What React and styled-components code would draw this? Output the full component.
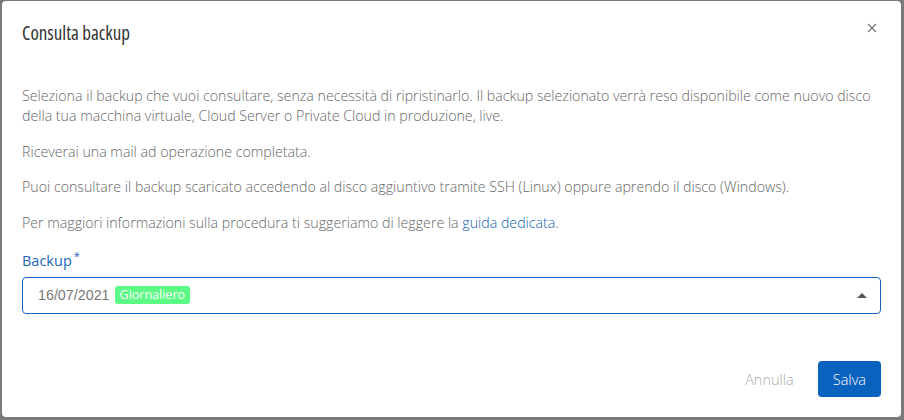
import React, { useState } from 'react';
import styled, { createGlobalStyle } from 'styled-components';

const GlobalStyle = createGlobalStyle`
  html, body {
    margin: 0;
    padding: 0;
    background: #7a7a7a;
  }
  body {
    font-family: "Open Sans", "Noto Sans", sans-serif;
    width: 904px;
    height: 420px;
    overflow: hidden;
  }
`

const Overlay = styled.div`
  width: 904px;
  height: 420px;
  padding: 1px 3px 3px 2px;
  box-sizing: border-box;
  background: #7a7a7a;
`

const Modal = styled.div`
  background: #fff;
  border-radius: 4px;
  height: 416px;
  display: flex;
  flex-direction: column;
  box-sizing: border-box;
`

const Header = styled.div`
  display: flex;
  align-items: center;
  justify-content: space-between;
  padding: 20px 22px 0 20px;
  height: 44px;
  box-sizing: border-box;
`

const Title = styled.h2`
  margin: 0;
  font-family: "Open Sans", sans-serif;
  font-stretch: 85%;
  font-weight: 500;
  font-size: 19px;
  color: #333;
`

const Close = styled.button`
  border: 0;
  background: none;
  padding: 0;
  width: 14px;
  height: 14px;
  cursor: pointer;
  display: flex;
  align-items: center;
  justify-content: center;
  margin-top: -10px;
`

const Body = styled.div`
  padding: 41px 20px 0 20px;
  flex: 1;
  display: flex;
  flex-direction: column;
  gap: 15.5px;
`

const Text = styled.p`
  margin: 0;
  font-size: 14.2px;
  font-weight: 300;
  line-height: 20px;
  color: #666;
`

const Link = styled.a`
  color: #0d5fb3;
  text-decoration: none;
`

const Field = styled.div`
  margin-top: -2px;
  display: flex;
  flex-direction: column;
  gap: 6px;
`

const Label = styled.label`
  font-size: 14.5px;
  color: #1a66b8;
  line-height: 20px;
  sup {
    font-size: 11px;
    margin-left: 2px;
  }
`

const Select = styled.div`
  height: 37px;
  border: 1px solid #1565c0;
  border-radius: 4px;
  display: flex;
  align-items: center;
  padding: 0 13px 0 15px;
  box-sizing: border-box;
  gap: 5px;
`

const DateText = styled.span`
  font-family: "Liberation Sans", Arial, sans-serif;
  font-size: 14.3px;
  color: #777;
`

const Badge = styled.span`
  background: ${p => p.color};
  color: #fff;
  font-size: 12.5px;
  line-height: 18px;
  padding: 0 5px;
  border-radius: 3px;
`

const Arrow = styled.span`
  margin-left: auto;
  width: 0;
  height: 0;
  border-left: 5px solid transparent;
  border-right: 5px solid transparent;
  border-bottom: 5px solid #555;
`

const Footer = styled.div`
  display: flex;
  justify-content: flex-end;
  align-items: center;
  gap: 24px;
  padding: 0 20px 20px 0;
`

const Button = styled.button`
  font-family: "Open Sans", sans-serif;
  font-size: 14.5px;
  font-weight: 300;
  border-radius: 4px;
  border: 0;
  height: 36px;
  padding: 0 ${p => (p.primary ? '15px' : '0')};
  background: ${p => (p.primary ? '#0a62bf' : 'transparent')};
  color: ${p => (p.primary ? '#fff' : '#aaa')};
  cursor: pointer;
`

const App = () => {
  const [backup] = useState({ date: '16/07/2021', kind: 'Giornaliero' });

  return (
    <Overlay>
      <GlobalStyle />
      <Modal>
        <Header>
          <Title>Consulta backup</Title>
          <Close aria-label="Chiudi">
            <svg width="10" height="10" viewBox="0 0 10 10">
              <path d="M1 1 L9 9 M9 1 L1 9" stroke="#777" strokeWidth="1.2" />
            </svg>
          </Close>
        </Header>
        <Body>
          <Text>
            Seleziona il backup che vuoi consultare, senza necessità di ripristinarlo. Il backup selezionato verrà reso disponibile come nuovo disco della tua macchina virtuale, Cloud Server o Private Cloud in produzione, live.
          </Text>
          <Text>Riceverai una mail ad operazione completata.</Text>
          <Text>Puoi consultare il backup scaricato accedendo al disco aggiuntivo tramite SSH (Linux) oppure aprendo il disco (Windows).</Text>
          <Text>
            Per maggiori informazioni sulla procedura ti suggeriamo di leggere la <Link href="#">guida dedicata</Link>.
          </Text>
          <Field>
            <Label>Backup<sup>*</sup></Label>
            <Select>
              <DateText>{backup.date}</DateText>
              <Badge color="#5dfa86">{backup.kind}</Badge>
              <Arrow />
            </Select>
          </Field>
        </Body>
        <Footer>
          <Button>Annulla</Button>
          <Button primary>Salva</Button>
        </Footer>
      </Modal>
    </Overlay>
  );
}

export default App;
